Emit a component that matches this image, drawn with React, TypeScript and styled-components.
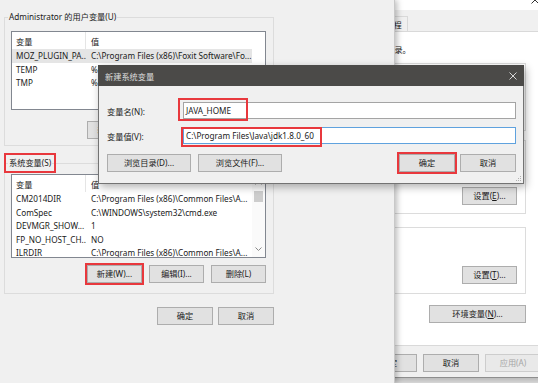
import React from 'react';
import styled, { createGlobalStyle, css } from 'styled-components';

const GlobalStyle = createGlobalStyle`
  *, *::before, *::after { box-sizing: border-box; }
  html, body { margin: 0; padding: 0; }
  body {
    width: 538px;
    height: 383px;
    overflow: hidden;
    background: #e9e9e9;
    font-family: "Noto Sans", "Noto Sans CJK SC", sans-serif;
    font-size: 8.2px;
    color: #1a1a1a;
  }
`;

const RED = '#e8383d';

const Desktop = styled.div`
  position: relative;
  width: 538px;
  height: 383px;
  overflow: hidden;
  background: #e9e9e9;
`;

/* ---------- shared parts ---------- */

const Button = styled.button<{ $w: number; $marked?: boolean }>`
  width: ${({ $w }) => $w}px;
  height: 18px;
  margin: 0;
  padding: 0;
  font: inherit;
  line-height: 16px;
  color: #1a1a1a;
  background: #e1e1e1;
  border: 1px solid #adadad;
  white-space: nowrap;
  flex-shrink: 0;

  &:disabled {
    color: #a6a6a6;
    background: #e9e9e9;
    border-color: #cdcdcd;
  }

  ${({ $marked }) => $marked && css`
    outline: 2px solid ${RED};
    outline-offset: 0;
  `}
`;

const Key = styled.span`
  text-decoration: underline;
`;

const ButtonRow = styled.div<{ $gap: number; $mt?: number }>`
  display: flex;
  justify-content: flex-end;
  gap: ${({ $gap }) => $gap}px;
  margin-top: ${({ $mt }) => $mt || 0}px;
`;

const Group = styled.div<{ $pad?: string; $h?: number; $mt?: number }>`
  position: relative;
  border: 1px solid #dcdcdc;
  padding: ${({ $pad }) => $pad || '0'};
  margin-top: ${({ $mt }) => $mt || 0}px;
  ${({ $h }) => $h && css`height: ${$h}px;`}
  display: flex;
  flex-direction: column;
`;

const Caption = styled.span<{ $marked?: boolean; $bg?: string }>`
  position: absolute;
  left: 3px;
  top: -7px;
  padding: 0 1px;
  line-height: 12px;
  white-space: nowrap;
  background: ${({ $bg }) => $bg || '#f0f0f0'};
  ${({ $marked }) => $marked && css`
    outline: 2px solid ${RED};
    outline-offset: 2px;
  `}
`;

/* ---------- system properties window (behind) ---------- */

const PropsWindow = styled.div`
  position: absolute;
  left: 229px;
  top: -12px;
  z-index: 1;
  width: 321px;
  height: 390px;
  background: #f0f0f0;
  border: 1px solid #8e8e8e;
  box-shadow: 0 3px 8px rgba(0, 0, 0, 0.25);
  display: flex;
  flex-direction: column;
`;

const PropsTitle = styled.div`
  height: 21px;
  background: #fff;
  display: flex;
  align-items: center;
  justify-content: space-between;
  padding-left: 8px;
`;

const CloseBox = styled.div`
  width: 28px;
  height: 100%;
  display: flex;
  align-items: center;
  justify-content: center;
`;

const Tabs = styled.div`
  height: 21px;
  display: flex;
  align-items: flex-end;
  padding-left: 8px;
`;

const Tab = styled.div<{ $active?: boolean }>`
  height: ${({ $active }) => ($active ? 17 : 15)}px;
  padding: 0 5px;
  margin-left: -1px;
  display: flex;
  align-items: center;
  border: 1px solid #d9d9d9;
  border-bottom: none;
  background: ${({ $active }) => ($active ? '#fff' : '#f0f0f0')};
  white-space: nowrap;
`;

const Panel = styled.div`
  flex: 1;
  margin: 0 6px;
  background: #fff;
  border: 1px solid #d9d9d9;
  padding: 12px 16px 0 3px;
  display: flex;
  flex-direction: column;
`;

const Note = styled.div`
  line-height: 12px;
  white-space: nowrap;
  margin-left: 7px;
`;

const GroupText = styled.div`
  line-height: 12px;
  white-space: nowrap;
  flex: 1;
  padding-top: 12px;
`;

const PropsFooter = styled.div`
  height: 31px;
  display: flex;
  justify-content: flex-end;
  gap: 6px;
  padding: 8px 8px 0 0;
`;

/* ---------- environment variables window ---------- */

const EnvWindow = styled.div`
  position: absolute;
  left: 0;
  top: 0;
  z-index: 2;
  width: 395px;
  height: 383px;
  background: #f0f0f0;
  border-right: 1px solid #c8c8c8;
  box-shadow: 2px 0 6px rgba(0, 0, 0, 0.28);
  padding: 17px 0 0 4px;
`;

const EnvColumn = styled.div`
  width: 270px;
  display: flex;
  flex-direction: column;
`;

const List = styled.div<{ $h: number }>`
  height: ${({ $h }) => $h}px;
  border: 1px solid #828790;
  background: #fff;
  display: flex;
  overflow: hidden;
  flex-shrink: 0;
`;

const Table = styled.div<{ $gutter?: number }>`
  flex: 1;
  min-width: 0;
  padding-right: ${({ $gutter }) => $gutter || 0}px;
`;

const HeaderRow = styled.div`
  display: grid;
  grid-template-columns: 74px 1fr;
  height: 17px;
`;

const HeaderCell = styled.div<{ $divider?: boolean }>`
  display: flex;
  align-items: center;
  padding-left: ${({ $divider }) => ($divider ? 4 : 5)}px;
  border-right: ${({ $divider }) => ($divider ? '1px solid #e5e5e5' : 'none')};
`;

const Row = styled.div<{ $selected?: boolean }>`
  display: grid;
  grid-template-columns: 74px 1fr;
  height: 13.5px;
  line-height: 13.5px;
  background: ${({ $selected }) => ($selected ? '#e5e5e5' : 'transparent')};
`;

const Cell = styled.div<{ $first?: boolean }>`
  padding-left: ${({ $first }) => ($first ? 4 : 5)}px;
  white-space: nowrap;
  overflow: hidden;
`;

const ScrollBar = styled.div`
  width: 13px;
  display: flex;
  flex-direction: column;
  align-items: center;
  background: #fafafa;
`;

const ScrollArrow = styled.div`
  height: 16px;
  display: flex;
  align-items: center;
  justify-content: center;
`;

const Thumb = styled.div`
  width: 9px;
  height: 11px;
  background: #cdcdcd;
`;

const ScrollTrack = styled.div`
  flex: 1;
`;

/* ---------- new system variable dialog ---------- */

const Dialog = styled.div`
  position: absolute;
  left: 98px;
  top: 65px;
  z-index: 3;
  width: 426px;
  height: 119px;
  background: #f0f0f0;
  border: 1px solid #737373;
  border-top: none;
  box-shadow: 2px 3px 8px rgba(0, 0, 0, 0.3);
  display: flex;
  flex-direction: column;
`;

const DialogTitle = styled.div`
  height: 21px;
  margin: 0 -1px;
  padding: 0 7px 0 7px;
  background: #4b4a48;
  color: #dedede;
  display: flex;
  align-items: center;
  justify-content: space-between;
`;

const DialogBody = styled.div`
  flex: 1;
  padding: 16px 7px 0 8px;
  display: flex;
  flex-direction: column;
`;

const FieldRow = styled.div<{ $mt?: number }>`
  display: flex;
  align-items: center;
  height: 17px;
  margin-top: ${({ $mt }) => $mt || 0}px;
`;

const FieldLabel = styled.div`
  width: 76px;
  white-space: nowrap;
`;

const TextBox = styled.div<{ $focused?: boolean }>`
  position: relative;
  flex: 1;
  height: 17px;
  line-height: 15px;
  padding-left: 2px;
  background: #fff;
  border: 1px solid ${({ $focused }) => ($focused ? '#5fa2de' : '#a4a4a4')};
  white-space: nowrap;
`;

const Mark = styled.div<{ $l: number; $t: number; $w: number; $h: number }>`
  position: absolute;
  left: ${({ $l }) => $l}px;
  top: ${({ $t }) => $t}px;
  width: ${({ $w }) => $w}px;
  height: ${({ $h }) => $h}px;
  border: 2px solid ${RED};
  pointer-events: none;
`;

const DialogButtons = styled.div`
  display: flex;
  align-items: center;
  gap: 7px;
  margin-top: 10px;
`;

const Spacer = styled.div`
  flex: 1;
`;

const Grip = styled.svg`
  position: absolute;
  right: 1px;
  bottom: 1px;
`;

/* ---------- data ---------- */

type Variable = { name: string; value: string; selected?: boolean };

const userVars: Variable[] = [
  { name: 'MOZ_PLUGIN_PA...', value: 'C:\\Program Files (x86)\\Foxit Software\\Fo...', selected: true },
  { name: 'TEMP', value: '%USERPROFILE%\\AppData\\Local\\Temp' },
  { name: 'TMP', value: '%USERPROFILE%\\AppData\\Local\\Temp' },
];

const systemVars: Variable[] = [
  { name: 'CM2014DIR', value: 'C:\\Program Files (x86)\\Common Files\\A...' },
  { name: 'ComSpec', value: 'C:\\WINDOWS\\system32\\cmd.exe' },
  { name: 'DEVMGR_SHOW...', value: '1' },
  { name: 'FP_NO_HOST_CH...', value: 'NO' },
  { name: 'ILRDIR', value: 'C:\\Program Files (x86)\\Common Files\\A...' },
];

const CloseIcon: React.FC<{ color: string }> = ({ color }) => (
  <svg width="8" height="8" viewBox="0 0 8 8">
    <path d="M0.5 0.5 L7.5 7.5 M7.5 0.5 L0.5 7.5" stroke={color} strokeWidth="1" fill="none" />
  </svg>
);

const Chevron: React.FC<{ up?: boolean }> = ({ up }) => (
  <svg width="7" height="4" viewBox="0 0 7 4">
    <path d={up ? 'M0.5 3.5 L3.5 0.5 L6.5 3.5' : 'M0.5 0.5 L3.5 3.5 L6.5 0.5'} stroke="#8a8a8a" fill="none" />
  </svg>
);

const VarList: React.FC<{ vars: Variable[]; height: number; scroll?: boolean }> = ({ vars, height, scroll }) => (
  <List $h={height}>
    <Table $gutter={scroll ? 0 : 13}>
      <HeaderRow>
        <HeaderCell $divider>变量</HeaderCell>
        <HeaderCell>值</HeaderCell>
      </HeaderRow>
      {vars.map((v) => (
        <Row key={v.name} $selected={v.selected}>
          <Cell $first>{v.name}</Cell>
          <Cell>{v.value}</Cell>
        </Row>
      ))}
    </Table>
    {scroll && (
      <ScrollBar>
        <ScrollArrow><Chevron up /></ScrollArrow>
        <Thumb />
        <ScrollTrack />
        <ScrollArrow><Chevron /></ScrollArrow>
      </ScrollBar>
    )}
  </List>
);

const App: React.FC = () => (
  <Desktop>
    <GlobalStyle />

    <PropsWindow>
      <PropsTitle>
        <span>系统属性</span>
        <CloseBox><CloseIcon color="#333" /></CloseBox>
      </PropsTitle>
      <Tabs>
        <Tab>计算机名</Tab>
        <Tab>硬件</Tab>
        <Tab $active>高级</Tab>
        <Tab>系统保护</Tab>
        <Tab>远程</Tab>
      </Tabs>
      <Panel>
        <Note>要进行大多数更改，你必须作为管理员登录。</Note>
        <Group $mt={7} $h={68} $pad="0 8px 8px 8px">
          <Caption $bg="#fff">性能</Caption>
          <GroupText>视觉效果，处理器计划，内存使用，以及虚拟内存</GroupText>
        </Group>
        <Group $mt={9} $h={74} $pad="0 8px 8px 8px">
          <Caption $bg="#fff">用户配置文件</Caption>
          <GroupText>与登录帐户相关的桌面设置</GroupText>
          <ButtonRow $gap={0}>
            <Button $w={55}>设置(<Key>E</Key>)...</Button>
          </ButtonRow>
        </Group>
        <Group $mt={13} $h={67} $pad="0 8px 9px 8px">
          <Caption $bg="#fff">启动和故障恢复</Caption>
          <GroupText>系统启动、系统故障和调试信息</GroupText>
          <ButtonRow $gap={0}>
            <Button $w={55}>设置(<Key>T</Key>)...</Button>
          </ButtonRow>
        </Group>
        <ButtonRow $gap={0} $mt={11}>
          <Button $w={97}>环境变量(<Key>N</Key>)...</Button>
        </ButtonRow>
      </Panel>
      <PropsFooter>
        <Button $w={56}>确定</Button>
        <Button $w={56}>取消</Button>
        <Button $w={56} disabled>应用(A)</Button>
      </PropsFooter>
    </PropsWindow>

    <EnvWindow>
      <EnvColumn>
        <Group $pad="13px 7px 6px 6px">
          <Caption>Administrator 的用户变量(U)</Caption>
          <VarList vars={userVars} height={79} />
          <ButtonRow $gap={7} $mt={11}>
            <Button $w={55}>新建(N)...</Button>
            <Button $w={55}>编辑(E)...</Button>
            <Button $w={55}>删除(D)</Button>
          </ButtonRow>
        </Group>

        <Group $mt={17} $pad="10px 7px 10px 6px">
          <Caption $marked>系统变量(S)</Caption>
          <VarList vars={systemVars} height={84} scroll />
          <ButtonRow $gap={7} $mt={7}>
            <Button $w={55} $marked>新建(W)...</Button>
            <Button $w={55}>编辑(I)...</Button>
            <Button $w={55}>删除(L)</Button>
          </ButtonRow>
        </Group>

        <ButtonRow $gap={5} $mt={13}>
          <Button $w={56}>确定</Button>
          <Button $w={56}>取消</Button>
        </ButtonRow>
      </EnvColumn>
    </EnvWindow>

    <Dialog>
      <DialogTitle>
        <span>新建系统变量</span>
        <CloseIcon color="#d6d6d6" />
      </DialogTitle>
      <DialogBody>
        <FieldRow>
          <FieldLabel>变量名(N):</FieldLabel>
          <TextBox>
            JAVA_HOME
            <Mark $l={-6} $t={-5} $w={70} $h={23} />
          </TextBox>
        </FieldRow>
        <FieldRow $mt={8}>
          <FieldLabel>变量值(V):</FieldLabel>
          <TextBox $focused>
            C:\Program Files\Java\jdk1.8.0_60
            <Mark $l={-3} $t={-1} $w={141} $h={20} />
          </TextBox>
        </FieldRow>
        <DialogButtons>
          <Button $w={84}>浏览目录(D)...</Button>
          <Button $w={84}>浏览文件(F)...</Button>
          <Spacer />
          <ButtonRow $gap={5}>
            <Button $w={56} $marked>确定</Button>
            <Button $w={56}>取消</Button>
          </ButtonRow>
        </DialogButtons>
      </DialogBody>
      <Grip width="7" height="7" viewBox="0 0 7 7">
        <rect x="5" y="1" width="1" height="1" fill="#b0b0b0" />
        <rect x="3" y="3" width="1" height="1" fill="#b0b0b0" />
        <rect x="5" y="3" width="1" height="1" fill="#b0b0b0" />
        <rect x="1" y="5" width="1" height="1" fill="#b0b0b0" />
        <rect x="3" y="5" width="1" height="1" fill="#b0b0b0" />
        <rect x="5" y="5" width="1" height="1" fill="#b0b0b0" />
      </Grip>
    </Dialog>
  </Desktop>
);

export default App;
